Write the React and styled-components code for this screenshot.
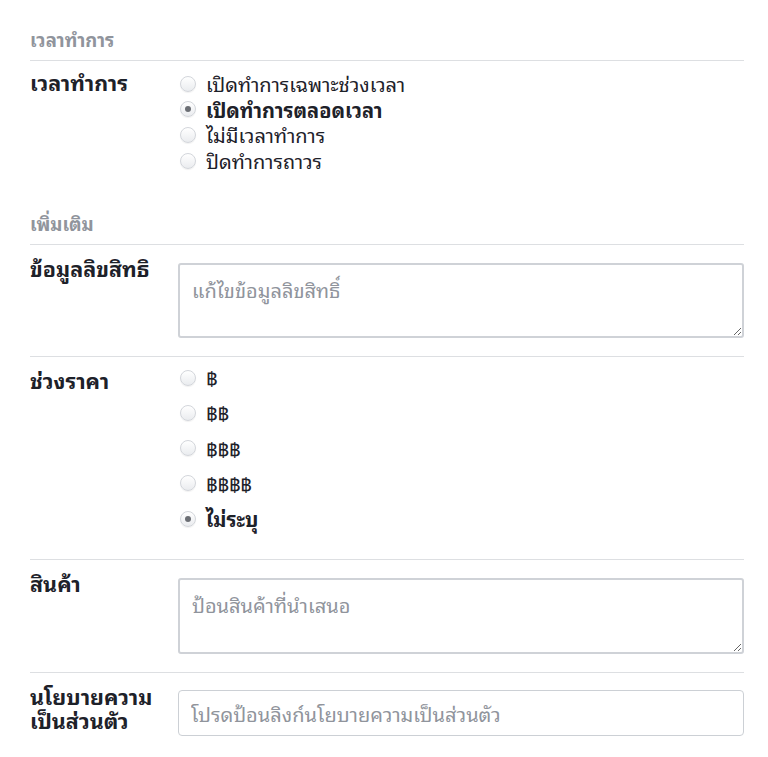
import React from "react";
import styled, { createGlobalStyle } from "styled-components";

const GlobalStyle = createGlobalStyle`
  body {
    margin: 0;
    background: #fff;
    font-family: "Noto Sans Thai Looped", "Noto Sans Thai", "Noto Sans", sans-serif;
    color: #1d2129;
  }
`;

const Page = styled.div`
  width: 714px;
  padding: 28px 0 20px 30px;
`;

const Section = styled.section`
  & + & {
    margin-top: 26px;
  }
`;

const SectionTitle = styled.div`
  font-size: 18.5px;
  line-height: 22px;
  font-weight: 700;
  color: #90949c;
  padding-bottom: 10px;
  border-bottom: 1px solid #dddfe2;
`;

const Row = styled.div`
  display: grid;
  grid-template-columns: 148px 1fr;
  padding: ${(p) => p.$pad || "12px 0 12px"};
  border-bottom: ${(p) => (p.$last ? "none" : "1px solid #dddfe2")};
`;

const Label = styled.div`
  font-size: 21.5px;
  line-height: 24px;
  font-weight: 700;
  color: #1d2129;
  padding-right: 6px;
  margin-top: -1px;
`;

const RadioList = styled.div`
  display: flex;
  flex-direction: column;
  gap: ${(p) => p.$gap || "0px"};
  padding-left: 2px;
  margin-top: ${(p) => p.$shift || "0px"};
`;

const Option = styled.label`
  display: flex;
  align-items: center;
  gap: 10px;
  font-size: 20px;
  line-height: 25.6px;
  font-weight: ${(p) => (p.$checked ? 700 : 400)};
  color: #1d2129;
`;

const Dot = styled.span`
  width: 16px;
  height: 16px;
  border-radius: 50%;
  box-sizing: border-box;
  border: 1px solid #d3d6db;
  background: linear-gradient(#ffffff, #eaecef);
  box-shadow: 0 1px 1px rgba(0, 0, 0, 0.06);
  display: flex;
  align-items: center;
  justify-content: center;
  flex-shrink: 0;

  &::after {
    content: "";
    width: 6px;
    height: 6px;
    border-radius: 50%;
    background: ${(p) => (p.$checked ? "#6b6e74" : "transparent")};
  }
`;

const TextArea = styled.textarea`
  display: block;
  box-sizing: border-box;
  width: 100%;
  height: ${(p) => p.$h || "76px"};
  margin: 6px 0;
  padding: 12px 12px;
  border: 2px solid #cfd2d7;
  border-radius: 3px;
  font-family: inherit;
  font-size: 20px;
  line-height: 24px;
  color: #1d2129;
  resize: vertical;
  outline: none;

  &::placeholder {
    color: #90949c;
  }
`;

const TextInput = styled.input`
  display: block;
  box-sizing: border-box;
  width: 100%;
  height: 46px;
  margin-top: 5px;
  padding: 0 12px;
  border: 1px solid #ccd0d5;
  border-radius: 4px;
  font-family: inherit;
  font-size: 20px;
  color: #1d2129;
  outline: none;

  &::placeholder {
    color: #90949c;
  }
`;

const hours = [
  "เปิดทำการเฉพาะช่วงเวลา",
  "เปิดทำการตลอดเวลา",
  "ไม่มีเวลาทำการ",
  "ปิดทำการถาวร",
];

const prices = ["฿", "฿฿", "฿฿฿", "฿฿฿฿", "ไม่ระบุ"];

function Radios({ items, selected, gap, shift }) {
  return (
    <RadioList $gap={gap} $shift={shift}>
      {items.map((t, i) => (
        <Option key={t} $checked={i === selected}>
          <Dot $checked={i === selected} />
          {t}
        </Option>
      ))}
    </RadioList>
  );
}

export default function App() {
  return (
    <>
      <GlobalStyle />
      <Page>
        <Section>
          <SectionTitle>เวลาทำการ</SectionTitle>
          <Row $last $pad="10px 0 13px">
            <Label>เวลาทำการ</Label>
            <Radios items={hours} selected={1} />
          </Row>
        </Section>
        <Section>
          <SectionTitle>เพิ่มเติม</SectionTitle>
          <Row>
            <Label>ข้อมูลลิขสิทธิ</Label>
            <TextArea $h="75px" placeholder="แก้ไขข้อมูลลิขสิทธิ์" />
          </Row>
          <Row $pad="12px 0 28px">
            <Label>ช่วงราคา</Label>
            <Radios items={prices} selected={4} gap="9.5px" shift="-4px" />
          </Row>
          <Row>
            <Label>สินค้า</Label>
            <TextArea placeholder="ป้อนสินค้าที่นำเสนอ" />
          </Row>
          <Row $last>
            <Label>นโยบายความเป็นส่วนตัว</Label>
            <TextInput placeholder="โปรดป้อนลิงก์นโยบายความเป็นส่วนตัว" />
          </Row>
        </Section>
      </Page>
    </>
  );
}
